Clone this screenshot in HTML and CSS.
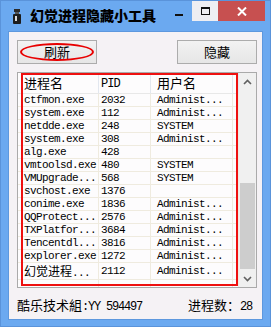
FILE: index.html
```html
<!DOCTYPE html>
<html>
<head>
<meta charset="utf-8">
<link rel="stylesheet" href="styles.css">
</head>
<body>
<div class="window">
  <div class="titlebar">
    <svg class="app-icon" width="10" height="15" viewBox="0 0 10 15">
      <rect x="2" y="0" width="6" height="3" fill="#2a2a2a"/>
      <rect x="3" y="3" width="4" height="2" fill="#555"/>
      <path d="M1 6 Q1 5 2 5 L8 5 Q9 5 9 6 L9 14 Q9 15 8 15 L2 15 Q1 15 1 14 Z" fill="#1c1c1c"/>
      <rect x="3" y="7" width="2" height="5" fill="#d8d8d8"/>
    </svg>
    <span class="title">幻觉进程隐藏小工具</span>
    <div class="controls">
      <span class="ctl ctl-min"><i></i></span>
      <span class="ctl ctl-max"><i></i></span>
      <span class="ctl ctl-close">
        <svg width="10" height="9" viewBox="0 0 10 9"><path d="M1 0.5 L9 8.5 M9 0.5 L1 8.5" stroke="#fff" stroke-width="2"/></svg>
      </span>
    </div>
  </div>

  <div class="client">
    <div class="toolbar">
      <button class="btn marked">刷新</button>
      <button class="btn">隐藏</button>
    </div>

    <div class="list marked-box">
      <div class="grid">
        <table>
          <tr class="head"><th class="c1">进程名</th><th class="c2"><span class="m">PID</span></th><th class="c3">用户名</th><th></th></tr>
          <tr><td class="c1 m">ctfmon.exe</td><td class="c2 m">2032</td><td class="c3 m">Administ...</td><td></td></tr>
          <tr><td class="c1 m">system.exe</td><td class="c2 m">112</td><td class="c3 m">Administ...</td><td></td></tr>
          <tr><td class="c1 m">netdde.exe</td><td class="c2 m">248</td><td class="c3 m">SYSTEM</td><td></td></tr>
          <tr><td class="c1 m">system.exe</td><td class="c2 m">308</td><td class="c3 m">Administ...</td><td></td></tr>
          <tr><td class="c1 m">alg.exe</td><td class="c2 m">428</td><td class="c3 m"></td><td></td></tr>
          <tr><td class="c1 m">vmtoolsd.exe</td><td class="c2 m">480</td><td class="c3 m">SYSTEM</td><td></td></tr>
          <tr><td class="c1 m">VMUpgrade...</td><td class="c2 m">568</td><td class="c3 m">SYSTEM</td><td></td></tr>
          <tr><td class="c1 m">svchost.exe</td><td class="c2 m">1376</td><td class="c3 m"></td><td></td></tr>
          <tr><td class="c1 m">conime.exe</td><td class="c2 m">1836</td><td class="c3 m">Administ...</td><td></td></tr>
          <tr><td class="c1 m">QQProtect...</td><td class="c2 m">2576</td><td class="c3 m">Administ...</td><td></td></tr>
          <tr><td class="c1 m">TXPlatfor...</td><td class="c2 m">3684</td><td class="c3 m">Administ...</td><td></td></tr>
          <tr><td class="c1 m">Tencentdl...</td><td class="c2 m">3816</td><td class="c3 m">Administ...</td><td></td></tr>
          <tr><td class="c1 m">explorer.exe</td><td class="c2 m">1272</td><td class="c3 m">Administ...</td><td></td></tr>
          <tr><td class="c1"><span class="cjk">幻觉进程</span><span class="m">...</span></td><td class="c2 m">2112</td><td class="c3 m">Administ...</td><td></td></tr>
          <tr><td class="c1"></td><td class="c2"></td><td class="c3"></td><td></td></tr>
        </table>
      </div>
      <div class="scrollbar">
        <div class="arrow">
          <svg width="9" height="6" viewBox="0 0 9 6"><path d="M1 5 L4.5 1.5 L8 5" stroke="#606060" stroke-width="1.6" fill="none"/></svg>
        </div>
        <div class="track"><div class="thumb"></div></div>
        <div class="arrow">
          <svg width="9" height="6" viewBox="0 0 9 6"><path d="M1 1 L4.5 4.5 L8 1" stroke="#606060" stroke-width="1.6" fill="none"/></svg>
        </div>
      </div>
    </div>

    <div class="status">
      <span>酷乐技术組<span class="m">:YY 594497</span></span>
      <span>进程数：<span class="m">28</span></span>
    </div>
  </div>
</div>
</body>
</html>
```

FILE: styles.css
```css
body {
  margin: 0;
  font-family: "Noto Sans CJK SC", sans-serif;
}

.window {
  width: 271px;
  height: 327px;
  box-sizing: border-box;
  background-color: #6ba9f0;
  border: 1px solid #5a93da;
  display: flex;
  flex-direction: column;
}

.titlebar {
  height: 30px;
  display: flex;
  align-items: flex-start;
  position: relative;
}

.app-icon {
  margin: 8px 0 0 11px;
}

.title {
  margin: 4px 0 0 8px;
  font-size: 14px;
  font-weight: 900;
  color: #000;
  line-height: 20px;
}

.controls {
  margin-left: auto;
  display: flex;
  margin-right: 5px;
}

.ctl {
  height: 20px;
  display: flex;
  align-items: center;
  justify-content: center;
}

.ctl-min {
  width: 26px;
}

.ctl-min i {
  display: block;
  width: 8px;
  height: 2px;
  margin-top: 8px;
  background-color: #111;
}

.ctl-max {
  width: 26px;
  background-color: #eeeef2;
}

.ctl-max i {
  display: block;
  width: 7px;
  height: 5px;
  border: 1px solid #111;
  border-top-width: 2px;
}

.ctl-close {
  width: 47px;
  background-color: #c75050;
}

.client {
  margin: 0 7px 6px 7px;
  flex: 1;
  background-color: #f5f2f5;
  border: 1px solid #5d98de;
  padding: 8px 5px 0 8px;
  display: flex;
  flex-direction: column;
}

.toolbar {
  display: flex;
  justify-content: space-between;
}

.btn {
  width: 80px;
  height: 24px;
  border: 1px solid #acacac;
  background: linear-gradient(#f2f2f2, #e6e6e6);
  font-family: "Noto Sans CJK SC", sans-serif;
  font-size: 13px;
  line-height: 20px;
  padding: 0;
  color: #000;
  position: relative;
}

.marked::after {
  content: "";
  position: absolute;
  left: 2px;
  top: 2px;
  width: 70px;
  height: 14px;
  border: 2px solid #e80000;
  border-radius: 50%;
}

.list {
  margin-top: 8px;
  height: 216px;
  box-sizing: border-box;
  border: 1px solid #aaaaaa;
  background-color: #fdfcfd;
  display: flex;
  position: relative;
}

.marked-box::after {
  content: "";
  position: absolute;
  left: 3px;
  top: 0px;
  width: 213px;
  height: 209px;
  border: 2px solid #ee1010;
}

.grid {
  flex: 1;
  overflow: hidden;
}

table {
  border-collapse: collapse;
  table-layout: fixed;
  width: 221px;
}

th, td {
  padding: 0;
  white-space: nowrap;
  overflow: hidden;
  text-align: left;
}

.head th {
  height: 19px;
  font-weight: normal;
  font-size: 13px;
  border-right: 1px solid #e2e7ef;
  border-bottom: 1px solid #e8e8e8;
  vertical-align: middle;
  line-height: 18px;
}

td {
  height: 12px;
  border-right: 1px solid #efebdf;
  border-bottom: 1px solid #efebdf;
  line-height: 12px;
}

.c1 {
  width: 74px;
  padding-left: 6px;
}

.c2 {
  width: 49px;
  padding-left: 2px;
}

.c3 {
  width: 75px;
  padding-left: 6px;
}

.m {
  font-family: "Liberation Mono", monospace;
  font-size: 11px;
  letter-spacing: -0.6px;
}

.head .m {
  font-size: 12px;
  letter-spacing: -1px;
}

.cjk {
  font-size: 12px;
}

.scrollbar {
  width: 17px;
  background-color: #f0f0f0;
  display: flex;
  flex-direction: column;
}

.arrow {
  height: 17px;
  display: flex;
  align-items: center;
  justify-content: center;
}

.track {
  flex: 1;
  display: flex;
  flex-direction: column;
  justify-content: flex-end;
  padding: 0 1px 1px 1px;
}

.thumb {
  height: 86px;
  background-color: #cdcdcd;
}

.status {
  flex: 1;
  display: flex;
  justify-content: space-between;
  align-items: center;
  font-size: 13px;
  padding: 2px 5px 0 0;
  color: #000;
}

.status .m {
  font-size: 12px;
  letter-spacing: -1.2px;
}
```
